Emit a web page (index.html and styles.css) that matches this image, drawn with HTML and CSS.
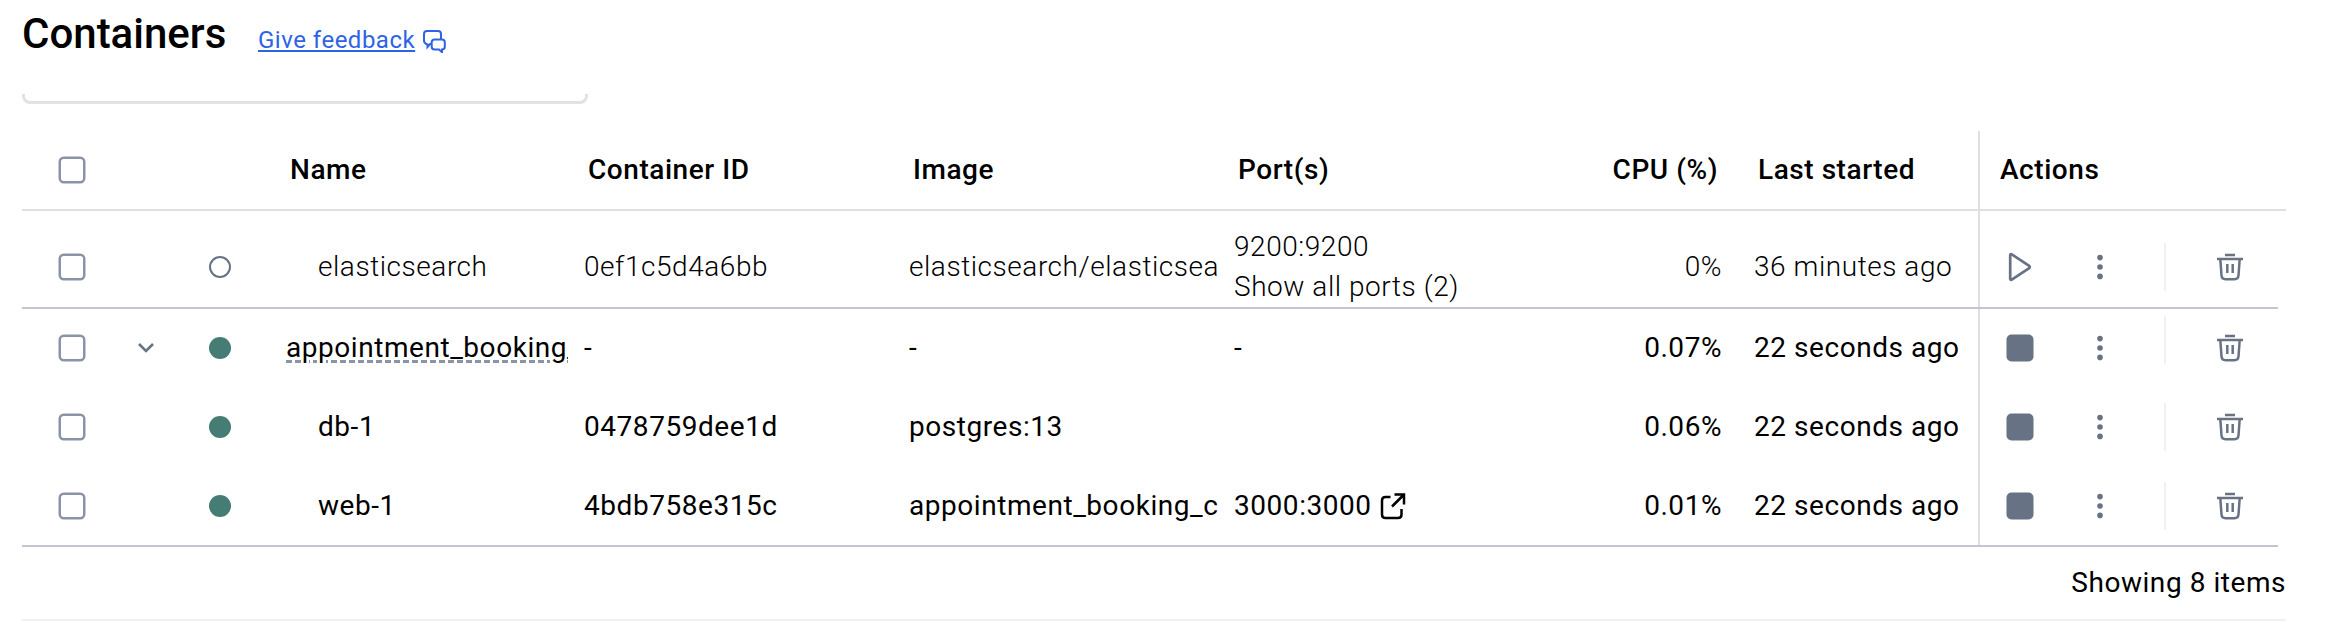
FILE: index.html
```html
<!DOCTYPE html>
<html lang="en">
<head>
<meta charset="utf-8">
<title>Containers</title>
<link rel="stylesheet" href="styles.css">
</head>
<body>
<svg width="0" height="0" class="defs">
  <symbol id="box" viewBox="0 0 28 28"><rect x="1.750" y="1.750" width="24.500" height="24.500" rx="4" fill="none" stroke="currentColor" stroke-width="2.500"/></symbol>
  <symbol id="chevron" viewBox="0 0 18 12"><path d="M2 2l7 7 7-7" fill="none" stroke="currentColor" stroke-width="2.6"/></symbol>
  <symbol id="play" viewBox="0 0 28 32"><path d="M4.200 4.200v23.600c0 .9.9 1.300 1.600.8L23.200 17.200c.8-.5.8-1.900 0-2.400L5.800 3.400C5.100 2.900 4.200 3.300 4.200 4.200z" fill="none" stroke="currentColor" stroke-width="2.700" stroke-linejoin="round"/></symbol>
  <symbol id="stop" viewBox="0 0 28 28"><rect x=".5" y=".5" width="27" height="27" rx="5"/></symbol>
  <symbol id="dots" viewBox="0 0 8 28"><circle cx="4" cy="4.600" r="2.800"/><circle cx="4" cy="14" r="2.800"/><circle cx="4" cy="23.400" r="2.800"/></symbol>
  <symbol id="trash" viewBox="0 0 28 28"><path d="M9 2h10M1 6h26M4.300 6l1.200 16.500q.3 3.700 4 3.700h9q3.700 0 4-3.700L23.700 6M11.300 11v9M16.700 11v9" fill="none" stroke="currentColor" stroke-width="2.500"/></symbol>
</svg>
<header class="page-head">
  <h1 class="title">Containers</h1>
  <a class="feedback"><span class="feedback-text">Give feedback</span><svg class="feedback-icon" viewBox="0 0 24 24"><path d="M9.500 15H8L5.500 18V15.500Q2 14.500 2 11.500V5Q2 2 5 2H16Q19 2 19 5V10" fill="none" stroke="currentColor" stroke-width="2"/><path d="M12.500 10.500h7.500q2.800 0 2.800 2.800v4.400q0 2.800-2.800 2.800v2.700l-3-2.700h-4.500q-2.800 0-2.800-2.800v-4.400Q9.700 10.500 12.500 10.500z" fill="none" stroke="currentColor" stroke-width="2"/></svg></a>
</header>
<div class="search-clip"><div class="search"></div></div>
<main class="table">
  <div class="row head">
    <div class="check"><svg class="box"><use href="#box"/></svg></div><div></div><div></div>
    <div class="name">Name</div><div class="cell">Container ID</div><div class="cell">Image</div><div class="cell">Port(s)</div><div class="cpu">CPU (%)</div><div class="last">Last started</div>
    <div class="actions">Actions</div>
  </div>
  <div class="row stopped">
    <div class="check"><svg class="box"><use href="#box"/></svg></div><div></div><div class="state"><i class="dot off"></i></div>
    <div class="name child">elasticsearch</div><div class="cell">0ef1c5d4a6bb</div><div class="cell">elasticsearch/elasticsea</div><div class="cell">9200:9200<br>Show all ports (2)</div><div class="cpu">0%</div><div class="last">36 minutes ago</div>
    <div class="actions"><svg class="play"><use href="#play"/></svg><svg class="more"><use href="#dots"/></svg><i class="sep"></i><svg class="trash"><use href="#trash"/></svg></div>
  </div>
  <div class="row group">
    <div class="check"><svg class="box"><use href="#box"/></svg></div><div class="expand"><svg class="chevron"><use href="#chevron"/></svg></div><div class="state"><i class="dot"></i></div>
    <div class="name"><span class="group-name">appointment_booking_</span></div><div class="cell">-</div><div class="cell">-</div><div class="cell">-</div><div class="cpu">0.07%</div><div class="last">22 seconds ago</div>
    <div class="actions"><svg class="stop"><use href="#stop"/></svg><svg class="more"><use href="#dots"/></svg><i class="sep"></i><svg class="trash"><use href="#trash"/></svg></div>
  </div>
  <div class="row">
    <div class="check"><svg class="box"><use href="#box"/></svg></div><div></div><div class="state"><i class="dot"></i></div>
    <div class="name child">db-1</div><div class="cell">0478759dee1d</div><div class="cell">postgres:13</div><div class="cell"></div><div class="cpu">0.06%</div><div class="last">22 seconds ago</div>
    <div class="actions"><svg class="stop"><use href="#stop"/></svg><svg class="more"><use href="#dots"/></svg><i class="sep"></i><svg class="trash"><use href="#trash"/></svg></div>
  </div>
  <div class="row final">
    <div class="check"><svg class="box"><use href="#box"/></svg></div><div></div><div class="state"><i class="dot"></i></div>
    <div class="name child">web-1</div><div class="cell">4bdb758e315c</div><div class="cell">appointment_booking_c</div><div class="cell port">3000:3000<svg class="external" viewBox="0 0 26 28"><path d="M10.500 5H5.500Q2 5 2 8.500v14Q2 26 5.500 26H18q3.500 0 3.500-3.500V17M14.500 2.500h9.500v10M23.500 3L12 14.500" fill="none" stroke="currentColor" stroke-width="2.500"/></svg></div><div class="cpu">0.01%</div><div class="last">22 seconds ago</div>
    <div class="actions"><svg class="stop"><use href="#stop"/></svg><svg class="more"><use href="#dots"/></svg><i class="sep"></i><svg class="trash"><use href="#trash"/></svg></div>
  </div>
</main>
<footer class="foot">Showing 8 items</footer>
</body>
</html>
```
FILE: styles.css
```css
* { box-sizing: border-box; }
body { margin: 0; padding: 0 48px 0 22px; background: #fff; color: #000; font-family: Roboto, sans-serif; font-size: 28px; line-height: 40px; letter-spacing: 0.55px; }
.defs { display: block; height: 0; }
svg { display: block; flex: none; }
.page-head { display: flex; align-items: flex-start; height: 94px; padding-top: 10px; }
.title { margin: 0; width: 236px; font-size: 42px; line-height: 48px; font-weight: 500; letter-spacing: 0; }
.feedback { display: flex; align-items: center; padding-top: 14px; color: #2e63e6; font-size: 24px; line-height: 32px; letter-spacing: 0.5px; }
.feedback-text { text-decoration: underline; text-decoration-thickness: 1.500px; text-underline-offset: 2px; text-decoration-skip-ink: none; }
.feedback-icon { width: 24px; height: 24px; margin: 1px 0 0 7px; }
.search-clip { height: 37px; overflow: hidden; }
.search { width: 566px; height: 72px; margin-top: -62px; border: 3px solid #e1e2e6; border-radius: 8px; }
.row { display: grid; grid-template-columns: 100px 62px 102px 298px 325px 325px 325px 195px 224px 308px; width: 2264px; height: 79px; align-items: center; }
.row > * { min-width: 0; white-space: nowrap; }
.head { height: 80px; border-bottom: 2px solid #e0e0e2; font-weight: 500; }
.stopped { height: 98px; font-weight: 300; }
.stopped > * { padding-top: 16px; }
.stopped, .final { background: linear-gradient(#c3c6d2, #c3c6d2) 0 100% / 2256px 2px no-repeat; padding-bottom: 2px; }
.group { height: 78px; }
.final { height: 81px; }
.check { padding-left: 36px; }
.box { width: 28px; height: 28px; color: #8b94a7; }
.expand { padding-left: 15px; }
.chevron { width: 18px; height: 12px; color: #677285; }
.state { padding-left: 25px; }
.dot { display: block; width: 22px; height: 22px; border-radius: 50%; background: #457c73; }
.off { background: none; border: 2px solid #677285; }
.head .name, .head .cell, .head .last { padding-left: 4px; }
.child { padding-left: 32px; }
.group-name { display: block; width: 282px; overflow: hidden; text-decoration: underline dashed #8b94a7 3px; text-underline-offset: 3px; }
.port { display: flex; align-items: center; }
.external { width: 26px; height: 28px; margin-left: 8px; }
.cpu { padding-right: 32px; text-align: right; }
.head .cpu { padding-right: 36px; }
.actions { display: flex; align-items: center; align-self: stretch; border-left: 2px solid #e0e0e2; padding-left: 26px; color: #677285; fill: currentColor; }
.head .actions { color: #000; padding-left: 20px; }
.play { width: 28px; height: 32px; }
.stop { width: 28px; height: 28px; }
.more { width: 8px; height: 28px; margin-left: 62px; }
.sep { width: 2px; height: 48px; margin: 0 50px 0 60px; background: #f0f0f2; }
.group .sep { margin-top: -16px; }
.trash { width: 28px; height: 28px; }
.foot { height: 74px; border-bottom: 2px solid #f1f1f3; padding-top: 16px; width: 2264px; text-align: right; }
```
